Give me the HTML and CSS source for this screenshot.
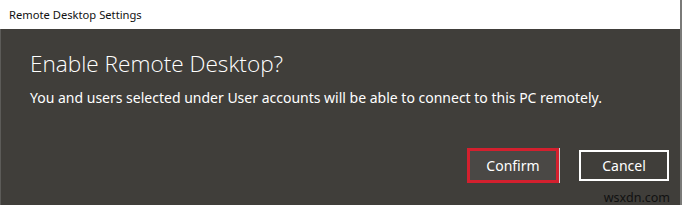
FILE: index.html
```html
<!DOCTYPE html>
<html lang="en">
<head>
    <meta charset="UTF-8">
    <title>Remote Desktop Settings</title>
    <link rel="stylesheet" href="styles.css">
</head>
<body>
    <div class="window">
        <div class="window__title">Remote Desktop Settings</div>
        <div class="dialog">
            <h1 class="dialog__heading">Enable Remote Desktop?</h1>
            <p class="dialog__text">You and users selected under User accounts will be able to connect to this PC remotely.</p>
            <div class="dialog__actions">
                <button class="btn btn--confirm">Confirm</button>
                <button class="btn">Cancel</button>
            </div>
            <div class="dialog__mark">wsxdn.com</div>
        </div>
    </div>
</body>
</html>
```

FILE: styles.css
```css
body{
    margin: 0;
    font-family: "Noto Sans", "Open Sans", sans-serif;
}
*, ::after, ::before{
    box-sizing: border-box;
}
h1, p{
    margin: 0;
}
.window{
    width: 682px;
    height: 205px;
    display: flex;
    flex-direction: column;
    border-right: 2px solid #7a7a78;
    overflow: hidden;
}
.window__title{
    height: 30px;
    padding: 7px 0 0 9px;
    background: #fff;
    color: #111;
    font-size: 11.2px;
}
.dialog{
    flex-grow: 1;
    background: #403e3a;
    border-left: 1px solid #5c5b58;
    padding: 19px 0 0 29px;
    color: #fff;
    display: flex;
    flex-direction: column;
}
.dialog__heading{
    font-family: "Open Sans", sans-serif;
    font-weight: 300;
    font-size: 22.6px;
    line-height: 32px;
}
.dialog__text{
    margin-top: 8px;
    font-size: 14px;
    line-height: 19px;
}
.dialog__actions{
    display: flex;
    justify-content: flex-end;
    align-items: center;
    gap: 20px;
    margin-top: 41px;
    padding-right: 11px;
}
.btn{
    font-family: inherit;
    font-size: 14px;
    color: #fff;
    background: transparent;
    border: 2px solid #fff;
    width: 90px;
    height: 31px;
    padding: 0;
}
.btn--confirm{
    width: 92px;
    height: 35px;
    border: 3px solid #d3202e;
    background: #4a4845;
    box-shadow: 1px 0 0 #cfcfcf;
}
.dialog__mark{
    align-self: flex-end;
    margin: 8px 10px 0 0;
    font-size: 12.5px;
    line-height: 14px;
    color: #111;
}
```
